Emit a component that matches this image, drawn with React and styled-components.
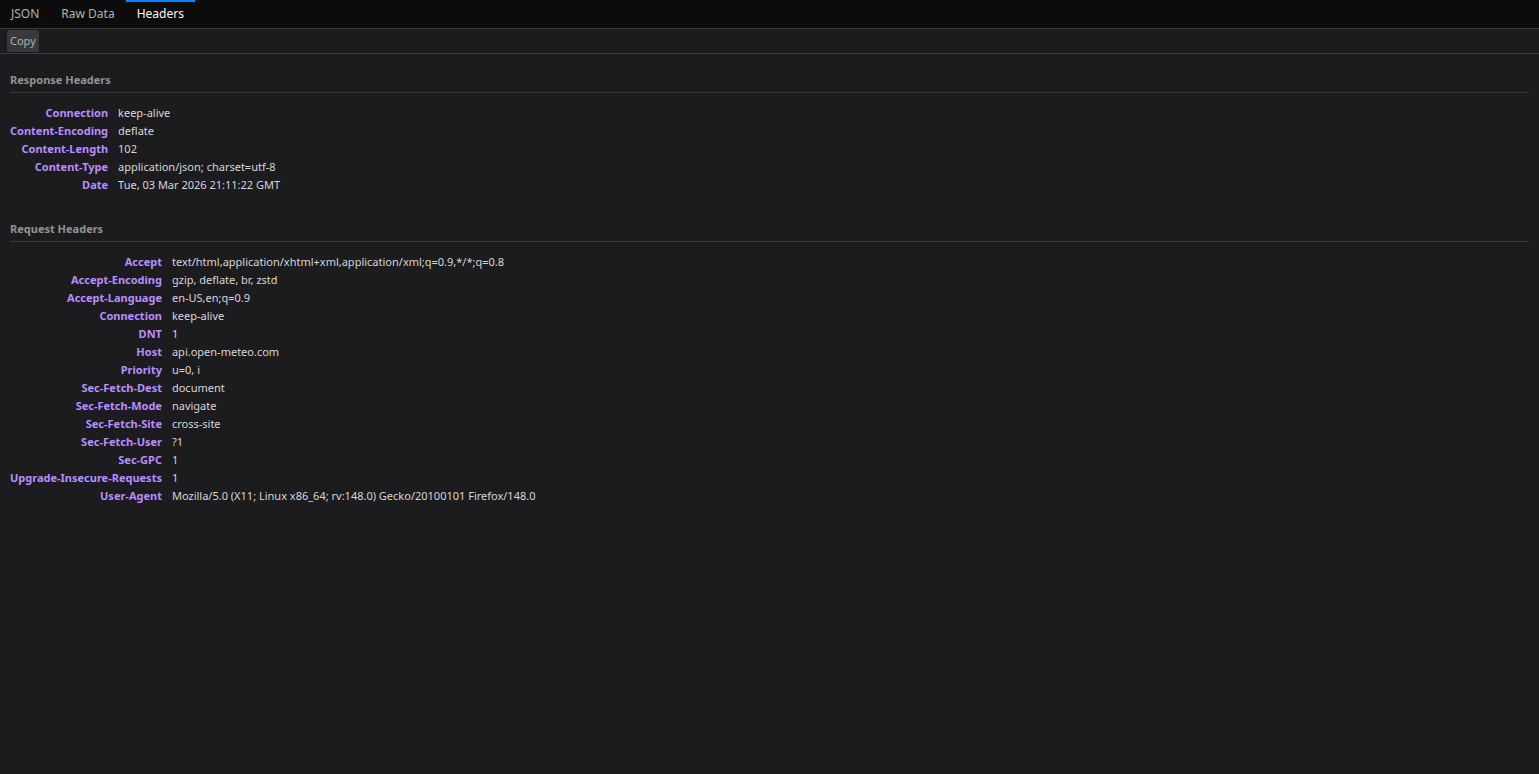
import React from 'react';
import styled, { createGlobalStyle } from 'styled-components';

const GlobalStyle = createGlobalStyle`
  html, body {
    margin: 0;
    padding: 0;
    background: #1c1b1e;
    height: 100%;
  }
  body {
    font-family: "Noto Sans", "DejaVu Sans", sans-serif;
    font-size: 11px;
    color: #d7d7db;
  }
`;

const responseHeaders = [
  ['Connection', 'keep-alive'],
  ['Content-Encoding', 'deflate'],
  ['Content-Length', '102'],
  ['Content-Type', 'application/json; charset=utf-8'],
  ['Date', 'Tue, 03 Mar 2026 21:11:22 GMT'],
];

const requestHeaders = [
  ['Accept', 'text/html,application/xhtml+xml,application/xml;q=0.9,*/*;q=0.8'],
  ['Accept-Encoding', 'gzip, deflate, br, zstd'],
  ['Accept-Language', 'en-US,en;q=0.9'],
  ['Connection', 'keep-alive'],
  ['DNT', '1'],
  ['Host', 'api.open-meteo.com'],
  ['Priority', 'u=0, i'],
  ['Sec-Fetch-Dest', 'document'],
  ['Sec-Fetch-Mode', 'navigate'],
  ['Sec-Fetch-Site', 'cross-site'],
  ['Sec-Fetch-User', '?1'],
  ['Sec-GPC', '1'],
  ['Upgrade-Insecure-Requests', '1'],
  ['User-Agent', 'Mozilla/5.0 (X11; Linux x86_64; rv:148.0) Gecko/20100101 Firefox/148.0'],
];

const tabs = ['JSON', 'Raw Data', 'Headers'];

const App = () => {
  return (
    <Page>
      <GlobalStyle />
      <TabBar>
        {tabs.map((t) => (
          <Tab key={t} $active={t === 'Headers'}>{t}</Tab>
        ))}
      </TabBar>
      <Toolbar>
        <ToolButton>Copy</ToolButton>
      </Toolbar>
      <Content>
        <Section title="Response Headers" rows={responseHeaders} />
        <Section title="Request Headers" rows={requestHeaders} />
      </Content>
    </Page>
  );
};

const Section = ({ title, rows }) => (
  <SectionBox>
    <SectionTitle>{title}</SectionTitle>
    <HeaderTable>
      <tbody>
        {rows.map(([name, value]) => (
          <tr key={name}>
            <Name>{name}</Name>
            <Value>{value}</Value>
          </tr>
        ))}
      </tbody>
    </HeaderTable>
  </SectionBox>
);

const Page = styled.div`
  min-height: 100vh;
  display: flex;
  flex-direction: column;
`;

const TabBar = styled.div`
  display: flex;
  height: 28px;
  background: #0c0c0d;
  border-bottom: 1px solid #38383d;
`;

const Tab = styled.div`
  position: relative;
  padding: 0 11px;
  line-height: 28px;
  font-size: 12px;
  color: ${(p) => (p.$active ? '#f9f9fa' : '#b1b1b3')};
  &::before {
    content: '';
    position: absolute;
    top: 0;
    left: 0;
    right: 0;
    height: 2px;
    background: ${(p) => (p.$active ? '#0a84ff' : 'transparent')};
  }
`;

const Toolbar = styled.div`
  display: flex;
  align-items: center;
  height: 24px;
  padding: 0 7px;
  border-bottom: 1px solid #38383d;
`;

const ToolButton = styled.button`
  font-family: inherit;
  font-size: 11px;
  color: #b1b1b3;
  background: #38383d;
  border: none;
  border-radius: 2px;
  height: 22px;
  padding: 0 3px 1px;
  margin: 0;
`;

const Content = styled.div`
  padding: 16px 10px 0;
`;

const SectionBox = styled.div`
  margin-bottom: 25px;
`;

const SectionTitle = styled.div`
  font-weight: bold;
  color: #939395;
  line-height: 20px;
  padding-bottom: 2px;
  border-bottom: 1px solid #38383d;
  margin-bottom: 11px;
`;

const HeaderTable = styled.table`
  border-collapse: collapse;
  border-spacing: 0;
`;

const Name = styled.td`
  font-weight: bold;
  color: #b98eff;
  text-align: right;
  white-space: nowrap;
  padding: 0 10px 0 0;
  line-height: 18px;
`;

const Value = styled.td`
  color: #d7d7db;
  white-space: nowrap;
  padding: 0;
  line-height: 18px;
`;

export default App;
